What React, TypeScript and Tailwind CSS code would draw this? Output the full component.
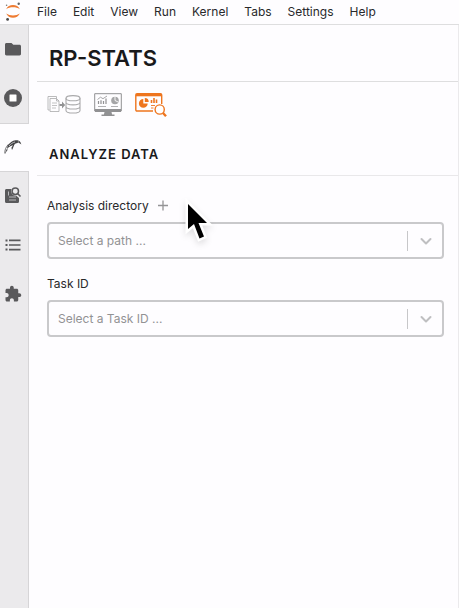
import type { ReactNode } from 'react';

const menus = ['File', 'Edit', 'View', 'Run', 'Kernel', 'Tabs', 'Settings', 'Help'];

function JupyterLogo() {
  return (
    <svg width="18" height="20" viewBox="0 0 18 20" aria-hidden="true">
      <path d="M2.2 7.200C3.400 4.400 6 3 9 3s5.600 1.400 6.800 4.200C14 5.900 11.600 5.300 9 5.300s-5 .6-6.800 1.900z" fill="#ee7b32" />
      <path d="M2.200 11.600C3.400 14.400 6 15.800 9 15.800s5.600-1.400 6.800-4.200C14 12.900 11.600 13.500 9 13.500s-5-.6-6.800-1.900z" fill="#ee7b32" />
      <circle cx="14.700" cy="1.700" r="1.200" fill="#666" />
      <circle cx="2.600" cy="3.300" r="0.800" fill="#777" />
      <circle cx="3.600" cy="17.400" r="1.400" fill="#484848" />
    </svg>
  );
}

function FolderIcon() {
  return (
    <svg width="18" height="18" viewBox="0 0 18 18" fill="#59595b" aria-hidden="true">
      <path d="M2.500 3h5l1.800 1.800h6.200c.9 0 1.500.6 1.500 1.500v7.700c0 .8-.6 1.400-1.500 1.400h-13C1.600 15.400 1 14.800 1 14V4.500C1 3.600 1.600 3 2.500 3z" />
    </svg>
  );
}

function RunningIcon() {
  return (
    <svg width="18" height="18" viewBox="0 0 18 18" aria-hidden="true">
      <circle cx="9" cy="9" r="9" fill="#59595b" />
      <rect x="5.500" y="5.500" width="7" height="7" rx="0.500" fill="#fff" />
    </svg>
  );
}

function BirdIcon() {
  return (
    <svg width="18" height="18" viewBox="0 0 18 18" fill="none" aria-hidden="true">
      <path d="M.8 15.500C.5 12.800 1.700 9 4.500 6.200" stroke="#77777a" strokeWidth="1" />
      <path d="M1 16c.2-2 .8-3.800 2.200-5.500l.4 1.500C2.500 13.200 1.700 14.500 1 16z" fill="#59595b" />
      <path d="M3.500 8C5.500 4.800 8.500 2.600 11.500 2.300c2.200-.2 4 .4 4.800 1.600.5.800.9 1.600 1 2.600-1.300-1.200-2.600-1.500-3.800-1.400-1.400.1-2.400.9-3.200 1.700L8.800 10.500 8 12l-.6-2.300L9 7.200C7 7.500 4.800 8.700 3 11z" fill="#444446" />
      <path d="M5 8c1.800-2.200 3.800-3.500 6-4" stroke="#c5c5c8" strokeWidth="0.900" />
      <circle cx="14.300" cy="4" r="0.600" fill="#fff" />
    </svg>
  );
}

function InspectIcon() {
  return (
    <svg width="18" height="18" viewBox="0 0 18 18" fill="none" aria-hidden="true">
      <path d="M2.500 2h5C7 3.500 7 5 7.800 6.500c.9 1.600 2.700 2.400 4.500 2.200L15 11v3.500c0 .8-.5 1.500-1.300 1.500H2.500C1.600 16 1 15.400 1 14.500v-11C1 2.600 1.600 2 2.500 2z" fill="#59595b" />
      <path d="M4.500 4.500v4M5 10h7M5 13h7" stroke="#c5c5c8" strokeWidth="0.900" />
      <circle cx="11.300" cy="4.300" r="3.200" stroke="#59595b" strokeWidth="1.500" />
      <path d="M13.500 6.500l3 3" stroke="#59595b" strokeWidth="1.600" />
    </svg>
  );
}

function ListIcon() {
  return (
    <svg width="18" height="18" viewBox="0 0 18 18" fill="#59595b" aria-hidden="true">
      <path d="M1.500 3.400h2v2h-2zM1.500 8h2v2h-2zM1.500 12.600h2v2h-2zM5 3.600h11.500v1.600H5zM5 8.200h11.500v1.600H5zM5 12.800h11.500v1.600H5z" />
    </svg>
  );
}

function PuzzleIcon() {
  return (
    <svg width="18" height="18" viewBox="0 0 24 24" fill="#59595b" aria-hidden="true">
      <path d="M20.500 11H19V7c0-1.100-.9-2-2-2h-4V3.500C13 2.120 11.880 1 10.500 1S8 2.120 8 3.500V5H4c-1.100 0-1.990.9-1.990 2v3.800H3.500c1.490 0 2.700 1.210 2.700 2.700s-1.210 2.700-2.700 2.700H2V20c0 1.100.9 2 2 2h3.800v-1.500c0-1.490 1.210-2.700 2.700-2.700s2.700 1.210 2.700 2.700V22H17c1.100 0 2-.9 2-2v-4h1.500c1.380 0 2.500-1.120 2.500-2.500S21.880 11 20.500 11z" />
    </svg>
  );
}

function ConvertIcon() {
  return (
    <svg width="34" height="26" viewBox="0 0 34 26" fill="none" stroke="#a9a9ab" aria-hidden="true">
      <path d="M2.500 18h-1.500V4.500h8.500v2" strokeWidth="0.800" />
      <path d="M3 6.500h6.500l2.500 2.500v10.500H3zM9.500 6.500v2.500H12" strokeWidth="0.800" />
      <path d="M5 11h5M5 13.500h5M5 16h4" strokeWidth="0.700" />
      <path d="M12.500 12h2.500v-2.500l3.200 3.500-3.200 3.500V14h-2.500z" fill="#929294" stroke="none" />
      <ellipse cx="26" cy="6.200" rx="7" ry="2.600" strokeWidth="1.100" />
      <path d="M19 6.200v12.300c0 3.400 14 3.400 14 0V6.200M19 10.300c0 3.400 14 3.400 14 0M19 14.400c0 3.400 14 3.400 14 0" strokeWidth="1.100" />
    </svg>
  );
}

function MonitorIcon() {
  return (
    <svg width="28" height="26" viewBox="0 0 28 26" fill="none" stroke="#919193" aria-hidden="true">
      <path d="M.7 19V1.700h26.600V19z" strokeWidth="1" />
      <path d="M1 17h26v3H1zM10.500 20h7l.7 3h-8.400zM7.500 22.500h13V24h-13z" fill="#919193" stroke="none" />
      <path d="M4.500 12v-3M7 12V8.200M9.500 12v-3M12 12V6.500" strokeWidth="1.200" />
      <path d="M3.500 7.500l3-2.300 2.500 1.500 4-2.700" strokeWidth="0.800" />
      <circle cx="21" cy="8.500" r="3.800" fill="#a5a5a7" stroke="none" />
      <path d="M21 4.500v4l3.500 1.700" stroke="#fff" strokeWidth="0.900" />
      <path d="M4 14.500h8M17 14.500h7" strokeWidth="0.700" />
    </svg>
  );
}

function AnalyzeIcon() {
  return (
    <svg width="32" height="26" viewBox="0 0 32 26" fill="none" stroke="#ee751e" aria-hidden="true">
      <path d="M18 19H2c-.8 0-1.200-.4-1.200-1.200V3c0-.8.400-1.200 1.200-1.200h23.500c.7 0 1.200.4 1.200 1.200v9" strokeWidth="1.400" />
      <path d="M1 2h25.500v2.300H1z" fill="#ee751e" stroke="none" />
      <path d="M8.300 7a4.400 4.400 0 104.400 4.400H8.300z" fill="#ee751e" stroke="none" />
      <path d="M9.800 6a4 4 0 013.900 4H9.800z" fill="#ee751e" stroke="none" />
      <path d="M16.500 11V8M19 11V6M21.500 11V7.500" strokeWidth="1.600" />
      <path d="M16 13.500h4M16 16h2.500" strokeWidth="0.900" />
      <circle cx="24.700" cy="17.500" r="4.600" fill="#fff" strokeWidth="1.400" />
      <path d="M28 21l3 3.200" strokeWidth="2.400" />
    </svg>
  );
}

const tabs: { name: string; icon: ReactNode }[] = [
  { name: 'File Browser', icon: <FolderIcon /> },
  { name: 'Running Kernels', icon: <RunningIcon /> },
  { name: 'RP-Stats', icon: <BirdIcon /> },
  { name: 'Property Inspector', icon: <InspectIcon /> },
  { name: 'Table of Contents', icon: <ListIcon /> },
  { name: 'Extensions', icon: <PuzzleIcon /> },
];

function SelectField({ id, placeholder }: { id: string; placeholder: string }) {
  return (
    <div className="relative">
      <select
        id={id}
        defaultValue=""
        className="block h-[37px] w-full appearance-none rounded-[4px] border-2 border-[#c9c9cb] bg-[#fefdff] pr-12 pl-[9px] text-[12px] text-[#929294]"
      >
        <option value="">{placeholder}</option>
      </select>
      <div className="pointer-events-none absolute inset-y-2 right-2 flex items-center gap-2">
        <span className="h-5 w-px bg-[#c7c7c9]" />
        <svg width="20" height="20" viewBox="0 0 20 20" fill="none" stroke="#bfbfc1" strokeWidth="2" strokeLinecap="round" strokeLinejoin="round" aria-hidden="true">
          <path d="M5.500 8l4.500 4.500L14.500 8" />
        </svg>
      </div>
    </div>
  );
}

export default function App() {
  return (
    <div className="relative flex min-h-screen flex-col bg-[#fefdff] font-['Inter',sans-serif] text-[#29292b]">
      <header className="flex h-[25px] items-center border-b border-[#dededf] pl-1">
        <JupyterLogo />
        <nav className="ml-[15px] flex gap-4 text-[12px] leading-5">
          {menus.map((menu) => (
            <button key={menu} type="button">{menu}</button>
          ))}
        </nav>
      </header>
      <div className="flex flex-1">
        <aside className="flex w-[29px] shrink-0 flex-col bg-[#ebeaec]">
          {tabs.map((tab) => (
            <button
              key={tab.name}
              type="button"
              aria-label={tab.name}
              className={
                tab.name === 'RP-Stats'
                  ? 'flex h-[49px] w-full items-center justify-center border-y border-[#d6d5d7] bg-[#fefdff] pr-[3px] pb-px'
                  : 'flex h-[49px] w-full items-center justify-center border-r border-[#d6d5d7] pr-[2px] pb-px'
              }
            >
              {tab.icon}
            </button>
          ))}
          <div className="flex-1 border-r border-[#d6d5d7]" />
        </aside>
        <main className="min-w-0 flex-1 border-r border-[#ebeaec] pl-2">
          <h1 className="border-b border-[#dededf] pt-[19px] pb-[9px] pl-3 text-[22px] leading-7 font-semibold text-[#19191b]">
            RP-STATS
          </h1>
          <div className="flex items-center gap-[13px] pt-[10px] pl-[10px]">
            <button type="button" aria-label="Convert data"><ConvertIcon /></button>
            <button type="button" aria-label="Monitor"><MonitorIcon /></button>
            <button type="button" aria-label="Analyze data"><AnalyzeIcon /></button>
          </div>
          <h2 className="border-b border-[#e9e8ea] pt-[26px] pb-[11px] pl-3 text-[13px] leading-5 font-semibold tracking-[1px] text-[#19191b]">
            ANALYZE DATA
          </h2>
          <form className="pt-5 pr-[14px] pl-[10px]">
            <div className="mb-[6px] flex h-5 items-center gap-[6px] text-[12px]">
              <label htmlFor="directory">Analysis directory</label>
              <button type="button" aria-label="Add directory" className="text-[#949496]">
                <svg width="16" height="16" viewBox="0 0 16 16" stroke="currentColor" strokeWidth="1.300" aria-hidden="true">
                  <path d="M8 2.500v10M3 7.500h10" />
                </svg>
              </button>
            </div>
            <SelectField id="directory" placeholder="Select a path ..." />
            <div className="mt-[15px] mb-[6px] flex h-5 items-center text-[12px]">
              <label htmlFor="task">Task ID</label>
            </div>
            <SelectField id="task" placeholder="Select a Task ID ..." />
          </form>
        </main>
      </div>
      <svg className="pointer-events-none absolute top-[198px] left-[183px] drop-shadow-md" width="30" height="48" viewBox="0 0 30 48" aria-hidden="true">
        <path d="M5 6v25l6-5 5.500 14.500 4.500-2L15.500 25H24z" fill="#fff" stroke="#fff" strokeWidth="5" />
        <path d="M5 6v25l6-5 5.500 14.500 4.500-2L15.500 25H24z" fill="#000" />
      </svg>
    </div>
  );
}
